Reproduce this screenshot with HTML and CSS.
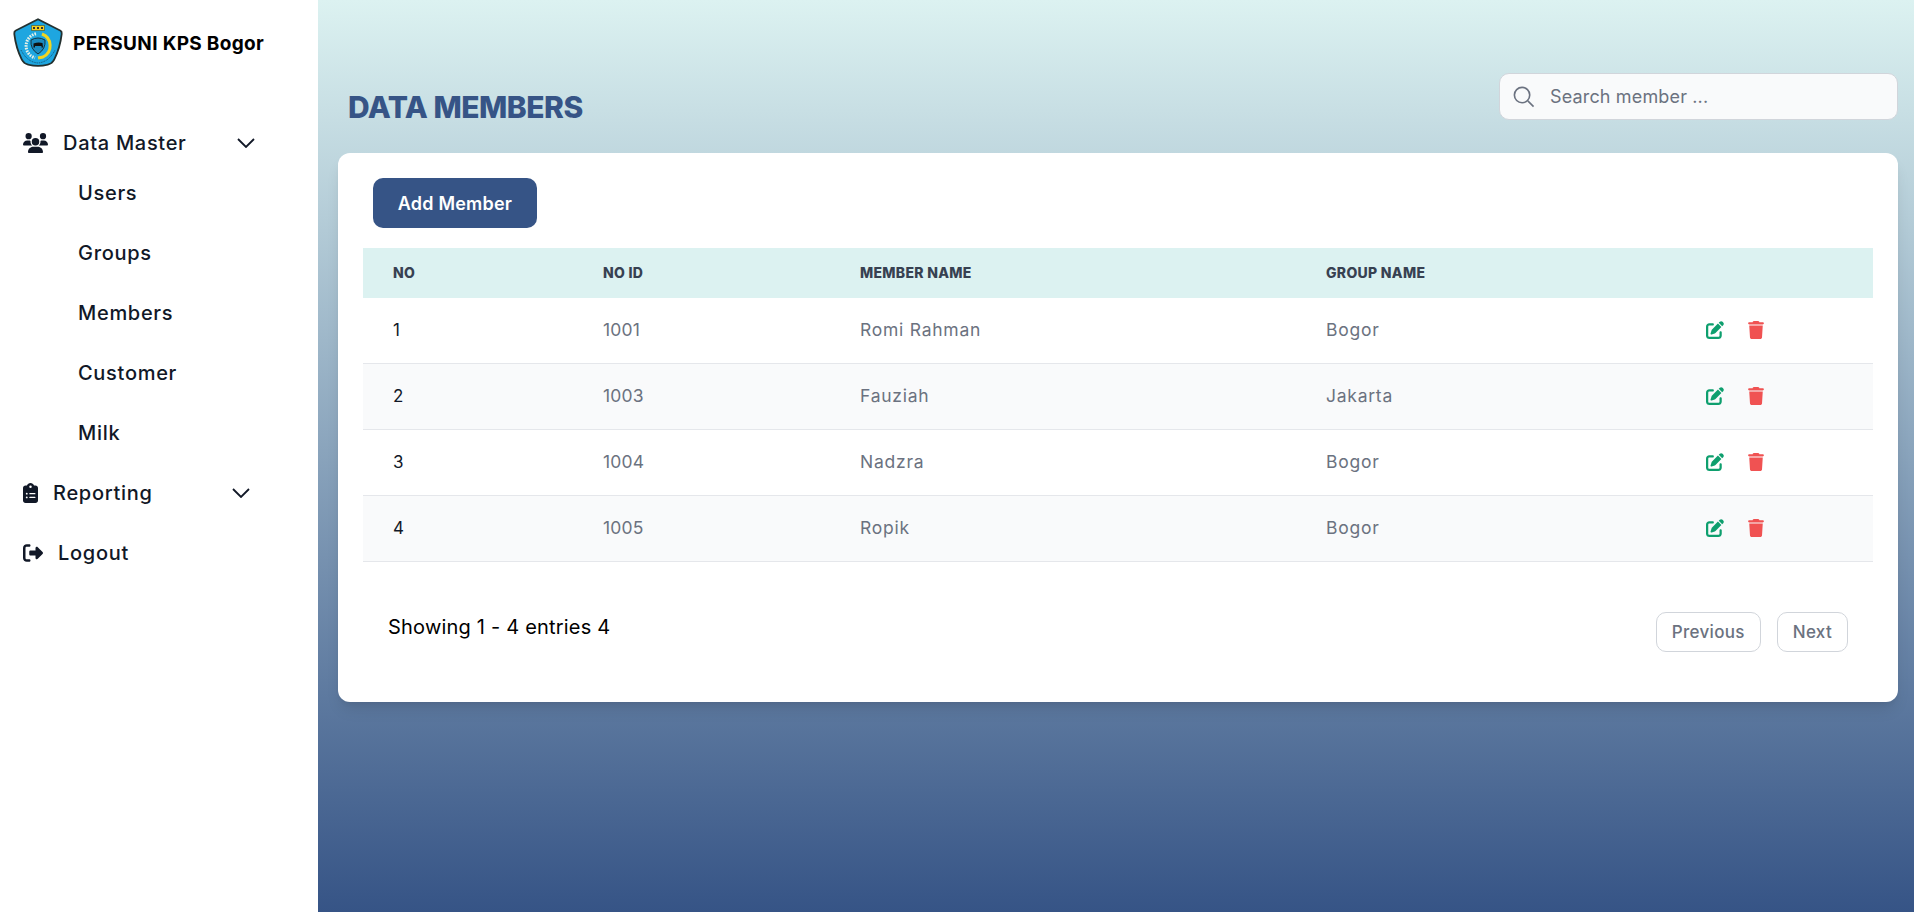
FILE: index.html
```html
<!DOCTYPE html>
<html lang="en">
<head>
<meta charset="utf-8">
<title>PERSUNI KPS Bogor</title>
<link rel="stylesheet" href="styles.css">
</head>
<body>
<svg class="sprite" aria-hidden="true">
  <symbol id="i-edit" viewBox="0 0 512 512"><path d="M471.6 21.7c-21.9-21.9-57.3-21.9-79.2 0L362.3 51.7l97.9 97.9 30.1-30.1c21.9-21.9 21.9-57.3 0-79.2L471.6 21.7zm-299.2 220c-6.1 6.1-10.8 13.6-13.5 21.9l-29.6 88.8c-2.9 8.6-.6 18.1 5.8 24.6s15.9 8.7 24.6 5.8l88.8-29.6c8.2-2.7 15.7-7.4 21.9-13.5L437.7 172.3 339.7 74.3 172.4 241.7zM96 64C43 64 0 107 0 160V416c0 53 43 96 96 96H352c53 0 96-43 96-96V320c0-17.7-14.3-32-32-32s-32 14.3-32 32v96c0 17.7-14.3 32-32 32H96c-17.7 0-32-14.3-32-32V160c0-17.7 14.3-32 32-32h96c17.7 0 32-14.3 32-32s-14.3-32-32-32H96z"/></symbol>
  <symbol id="i-trash" viewBox="0 0 448 512"><path d="M135.2 17.7L128 32H32C14.3 32 0 46.3 0 64S14.3 96 32 96H416c17.7 0 32-14.3 32-32s-14.3-32-32-32H320l-7.2-14.3C307.4 6.8 296.3 0 284.2 0H163.8c-12.1 0-23.2 6.8-28.6 17.7zM416 128H32L53.2 467c1.6 25.3 22.6 45 47.9 45H346.9c25.3 0 46.3-19.7 47.9-45L416 128z"/></symbol>
  <symbol id="i-chevron" viewBox="0 0 18 10"><path d="M1 1l8 8 8-8"/></symbol>
</svg>
<aside class="sidebar">
  <div class="brand">
    <svg class="logo" viewBox="0 0 50 50">
      <path d="M25 .3 L48 12 Q50 13 49.6 16 Q48 30 42 42 Q40 46 35 47.5 Q25 50 15 47.5 Q10 46 8 42 Q2 30 .4 16 Q0 13 2 12Z" fill="#23302f"/>
      <path d="M25 2.2 L46.8 13.2 Q48 14 47.8 16 Q46 30 40.5 41 Q38.5 45 34 46 Q25 48 16 46 Q11.5 45 9.5 41 Q4 30 2.2 16 Q2 14 3.2 13.2Z" fill="#1ea6e0"/>
      <path d="M18.5 7.5 H31.5 V12.5 H18.5Z" fill="#f2cf20" stroke="#2b3a2a" stroke-width=".5"/>
      <path d="M20 9h2v2h-2zM24 9h2v2h-2zM28 9h2v2h-2z" fill="#333"/>
      <path d="M29 16 A12.5 12.5 0 0 1 30 39 L25 40" fill="none" stroke="#f2d520" stroke-width="3"/>
      <path d="M23 15.7 A12.5 12.5 0 0 0 22 39.9" fill="none" stroke="#e8f1e8" stroke-width="3" stroke-dasharray="1.6 1.1"/>
      <path d="M18 22 Q25 18 32 22 Q33 31 25 36 Q17 31 18 22Z" fill="#1a8cc2" stroke="#15343f" stroke-width="1"/>
      <path d="M20.5 25.5 Q25 24 29.5 25 L30 29.5 H28.5 V28 H22 V29.5 H20.5Z" fill="#111"/>
      <path d="M8 32 Q14 44 25 45 Q36 44 42 32" fill="none" stroke="#17506e" stroke-width="1" stroke-dasharray="1 .8"/>
    </svg>
    <span class="brand-name">PERSUNI KPS Bogor</span>
  </div>
  <nav class="menu">
    <div class="menu-item menu-data">
      <svg class="ico ico-users" viewBox="0 0 640 512"><path d="M144 0a80 80 0 1 1 0 160A80 80 0 1 1 144 0zM512 0a80 80 0 1 1 0 160A80 80 0 1 1 512 0zM0 298.7C0 239.8 47.8 192 106.7 192h42.7c15.9 0 31 3.5 44.6 9.7c-1.3 7.2-1.9 14.7-1.9 22.3c0 38.2 16.8 72.5 43.3 96c-.2 0-.4 0-.7 0H21.3C9.6 320 0 310.4 0 298.7zM405.3 320c-.2 0-.4 0-.7 0c26.6-23.5 43.3-57.8 43.3-96c0-7.6-.7-15-1.9-22.3c13.6-6.3 28.7-9.7 44.6-9.7h42.7C592.2 192 640 239.8 640 298.7c0 11.8-9.6 21.3-21.3 21.3H405.3zM224 224a96 96 0 1 1 192 0 96 96 0 1 1 -192 0zM128 485.3C128 411.7 187.7 352 261.3 352H378.7C452.3 352 512 411.7 512 485.3c0 14.7-11.9 26.7-26.7 26.7H154.7c-14.7 0-26.7-11.9-26.7-26.7z"/></svg>
      <span class="menu-label">Data Master</span>
      <svg class="chevron"><use href="#i-chevron"/></svg>
    </div>
    <a class="sub-item">Users</a>
    <a class="sub-item">Groups</a>
    <a class="sub-item">Members</a>
    <a class="sub-item">Customer</a>
    <a class="sub-item">Milk</a>
    <div class="menu-item menu-report">
      <svg class="ico ico-clip" viewBox="0 0 384 512"><path d="M192 0c-41.8 0-77.4 26.7-90.5 64H64C28.7 64 0 92.7 0 128V448c0 35.3 28.7 64 64 64H320c35.3 0 64-28.7 64-64V128c0-35.3-28.7-64-64-64H282.5C269.4 26.7 233.8 0 192 0zm0 64a32 32 0 1 1 0 64 32 32 0 1 1 0-64zM72 272a24 24 0 1 1 48 0 24 24 0 1 1 -48 0zm104-16H304c8.8 0 16 7.2 16 16s-7.2 16-16 16H176c-8.8 0-16-7.2-16-16s7.2-16 16-16zM72 368a24 24 0 1 1 48 0 24 24 0 1 1 -48 0zm88 0c0-8.8 7.2-16 16-16H304c8.8 0 16 7.2 16 16s-7.2 16-16 16H176c-8.8 0-16-7.2-16-16z"/></svg>
      <span class="menu-label">Reporting</span>
      <svg class="chevron"><use href="#i-chevron"/></svg>
    </div>
    <div class="menu-item menu-logout">
      <svg class="ico ico-out" viewBox="0 0 512 512"><path d="M377.9 105.9L500.7 228.7c7.2 7.2 11.3 17.1 11.3 27.3s-4.1 20.1-11.3 27.3L377.9 406.1c-6.4 6.4-15 9.9-24 9.9c-18.7 0-33.9-15.2-33.9-33.9l0-62.1-128 0c-17.7 0-32-14.3-32-32l0-64c0-17.7 14.3-32 32-32l128 0 0-62.1c0-18.7 15.2-33.9 33.9-33.9c9 0 17.6 3.6 24 9.9zM160 96L96 96c-17.7 0-32 14.3-32 32l0 256c0 17.7 14.3 32 32 32l64 0c17.7 0 32 14.3 32 32s-14.3 32-32 32l-64 0c-53 0-96-43-96-96L0 128C0 75 43 32 96 32l64 0c17.7 0 32 14.3 32 32s-14.3 32-32 32z"/></svg>
      <span class="menu-label">Logout</span>
    </div>
  </nav>
</aside>
<main class="main">
  <header class="topbar">
    <h1 class="title">DATA MEMBERS</h1>
    <div class="search">
      <svg class="search-ico" viewBox="0 0 24 24"><circle cx="10.5" cy="10.5" r="8"/><path d="M16.5 16.5L22.5 22.5"/></svg>
      <span class="search-text">Search member ...</span>
    </div>
  </header>
  <section class="card">
    <button class="add-btn">Add Member</button>
    <table class="table">
      <colgroup>
        <col class="c-no"><col class="c-id"><col class="c-name"><col class="c-group"><col>
      </colgroup>
      <thead>
        <tr><th>NO</th><th>NO ID</th><th>MEMBER NAME</th><th>GROUP NAME</th><th></th></tr>
      </thead>
      <tbody>
        <tr><td class="num">1</td><td class="id">1001</td><td>Romi Rahman</td><td>Bogor</td><td><span class="act-wrap"><svg class="act act-edit"><use href="#i-edit"/></svg><svg class="act act-del"><use href="#i-trash"/></svg></span></td></tr>
        <tr><td class="num">2</td><td class="id">1003</td><td>Fauziah</td><td>Jakarta</td><td><span class="act-wrap"><svg class="act act-edit"><use href="#i-edit"/></svg><svg class="act act-del"><use href="#i-trash"/></svg></span></td></tr>
        <tr><td class="num">3</td><td class="id">1004</td><td>Nadzra</td><td>Bogor</td><td><span class="act-wrap"><svg class="act act-edit"><use href="#i-edit"/></svg><svg class="act act-del"><use href="#i-trash"/></svg></span></td></tr>
        <tr><td class="num">4</td><td class="id">1005</td><td>Ropik</td><td>Bogor</td><td><span class="act-wrap"><svg class="act act-edit"><use href="#i-edit"/></svg><svg class="act act-del"><use href="#i-trash"/></svg></span></td></tr>
      </tbody>
    </table>
    <div class="pager-row">
      <span class="showing">Showing 1 - 4 entries 4</span>
      <div class="pager">
        <button class="page-btn">Previous</button>
        <button class="page-btn">Next</button>
      </div>
    </div>
  </section>
</main>
</body>
</html>
```

FILE: styles.css
```css
* { box-sizing: border-box; }
html, body { margin: 0; height: 100%; }
body {
  display: flex;
  height: 912px;
  overflow: hidden;
  font-family: Inter, "Noto Sans", sans-serif;
  background: #fff;
}
.sprite { width: 0; height: 0; position: absolute; }

.sidebar {
  width: 318px;
  flex: none;
  background: #fff;
  color: #111827;
}
.brand {
  display: flex;
  align-items: center;
  padding: 18px 0 0 13px;
  height: 68px;
}
.logo { width: 50px; height: 50px; flex: none; }
.brand-name {
  margin-left: 10px;
  font-size: 19px;
  font-weight: 700;
  color: #000;
  letter-spacing: 0.33px;
}
.menu { margin-top: 55px; display: flex; flex-direction: column; }
.menu-item, .sub-item {
  display: flex;
  align-items: center;
  height: 60px;
  font-size: 20px;
  font-weight: 450;
  letter-spacing: 0.7px;
  color: #111827;
}
.menu-item { padding-left: 23px; }
.menu-data { height: 40px; padding-right: 63px; }
.menu-report { padding-right: 68px; }
.sub-item { padding-left: 78px; }
.ico { fill: #111827; flex: none; }
.ico-users { width: 25px; height: 20px; margin-right: 15px; }
.ico-clip { width: 15px; height: 20px; margin-right: 15px; }
.ico-out { width: 20px; height: 20px; margin-right: 15px; }
.menu-label { flex: none; }
.chevron {
  width: 18px;
  height: 10px;
  fill: none;
  stroke: #111827;
  stroke-width: 1.8;
  margin-left: auto;
  flex: none;
}

.main {
  flex: 1;
  min-width: 0;
  padding: 73px 16px 0 20px;
  background: linear-gradient(to bottom, #dcf2f1, #365486);
}
.topbar {
  display: flex;
  justify-content: space-between;
  align-items: flex-start;
  padding-left: 10px;
  height: 80px;
}
.title {
  margin: 12px 0 0;
  font-size: 30px;
  line-height: 44px;
  font-weight: 800;
  letter-spacing: -0.5px;
  color: #365486;
}
.search {
  width: 399px;
  height: 47px;
  display: flex;
  align-items: center;
  padding-left: 12px;
  background: #f9fafb;
  border: 1px solid #d1d5db;
  border-radius: 10px;
}
.search-ico {
  width: 23px;
  height: 23px;
  fill: none;
  stroke: #6b7280;
  stroke-width: 1.7;
  flex: none;
}
.search-text {
  margin-left: 15px;
  font-size: 18px;
  letter-spacing: 0.15px;
  color: #6b7280;
}

.card {
  height: 549px;
  background: #fff;
  border-radius: 12px;
  box-shadow: 0 10px 15px -3px rgba(0,0,0,.1), 0 4px 6px -4px rgba(0,0,0,.1);
  padding: 25px 25px 0;
}
.add-btn {
  display: block;
  margin-left: 10px;
  width: 164px;
  height: 50px;
  border: 0;
  border-radius: 10px;
  background: #365486;
  color: #fff;
  font: 600 18px Inter, "Noto Sans", sans-serif;
  letter-spacing: 0.2px;
}
.table {
  width: 100%;
  margin-top: 20px;
  border-collapse: separate;
  border-spacing: 0;
  table-layout: fixed;
}
.c-no { width: 210px; }
.c-id { width: 257px; }
.c-name { width: 466px; }
.c-group { width: 380px; }
.table thead tr { background: #dcf2f1; height: 50px; }
.table th {
  padding: 0 30px 2px;
  text-align: left;
  font-size: 14px;
  font-weight: 800;
  letter-spacing: 0.3px;
  color: #374151;
}
.table tbody tr { height: 66px; }
.table tbody tr:nth-child(even) { background: #f9fafb; }
.table td {
  padding: 0 30px 2px;
  font-size: 17.5px;
  letter-spacing: 0.75px;
  color: #6b7280;
  border-bottom: 1px solid #e5e7eb;
}
.table td.num { color: #111827; font-size: 17px; letter-spacing: 0; }
.table td.id { letter-spacing: 0.2px; }
.act-wrap { display: flex; align-items: center; gap: 24px; }
.act { height: 18px; flex: none; }
.act-edit { width: 18px; fill: #0e9f6e; }
.act-del { width: 16px; fill: #f05252; }

.pager-row {
  display: flex;
  justify-content: space-between;
  align-items: flex-start;
  padding: 50px 25px 0;
}
.showing { font-size: 20px; letter-spacing: 0.2px; color: #000; line-height: 30px; }
.pager { display: flex; gap: 16px; }
.page-btn {
  height: 40px;
  padding: 0 15px;
  background: #fff;
  border: 1px solid #d1d5db;
  border-radius: 10px;
  color: #6b7280;
  font: 500 17px Inter, "Noto Sans", sans-serif;
  letter-spacing: 0.3px;
}
```
